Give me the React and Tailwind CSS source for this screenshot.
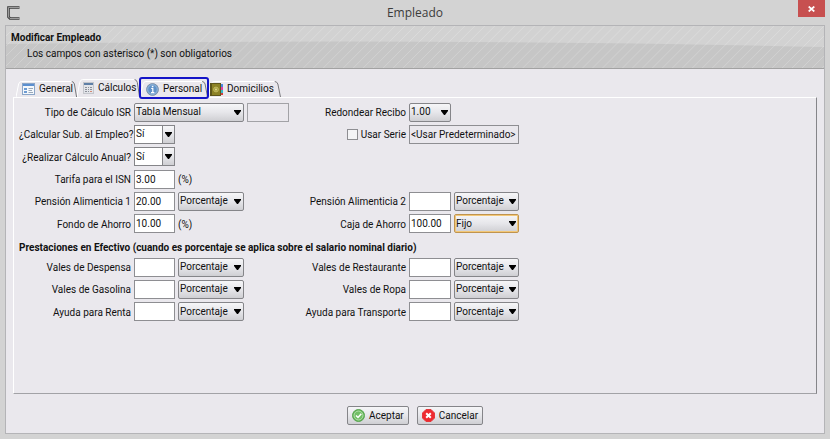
import React, { useState } from 'react';
import clsx from 'clsx';

const buttonFace = 'bg-linear-to-b from-[#f6f6f8] via-[#e6e6ea] to-[#cfcfd3]';

const GeneralIcon = () => (
  <svg width="13" height="12" viewBox="0 0 13 12" aria-hidden="true">
    <rect x="0.5" y="0.5" width="12" height="11" fill="#f4f8fc" stroke="#8ba6c8" />
    <rect x="1" y="1" width="11" height="2" fill="#5b8fd0" />
    <path d="M2 5h3v2H2zM2 8h3v2H2z" fill="#6d9bd2" />
    <path d="M6.5 5.5H11M6.5 7.5H10M6.5 9.5H11" stroke="#9aa8b8" />
  </svg>
);

const CalculatorIcon = () => (
  <svg width="11" height="12" viewBox="0 0 11 12" aria-hidden="true">
    <rect x="0.5" y="0.5" width="10" height="11" fill="#e2e4e9" stroke="#c4c6cc" />
    <rect x="1" y="1" width="9" height="2" fill="#5e7ea6" />
    <path d="M2 5h2v1H2zM5 5h1v1H5zM7 5h2v1H7zM2 7h2v1H2zM5 7h1v1H5zM7 7h2v1H7zM2 9h2v1H2zM5 9h1v1H5z" fill="#8b8f98" />
    <path d="M7 9h2v1H7z" fill="#d38a75" />
  </svg>
);

const InfoIcon = () => (
  <svg width="13" height="13" viewBox="0 0 13 13" aria-hidden="true">
    <circle cx="6.5" cy="6.5" r="5.9" fill="#5f92c8" stroke="#8194a9" />
    <circle cx="6.5" cy="6.5" r="4.8" fill="none" stroke="#a5c4e2" strokeWidth="0.8" />
    <path d="M5.2 5.5h1.6v4M5 9.7h3.4" stroke="#fff" strokeWidth="1.2" fill="none" />
    <rect x="5.8" y="2.8" width="1.6" height="1.5" fill="#fff" />
  </svg>
);

const BookIcon = () => (
  <svg width="13" height="13" viewBox="0 0 13 13" aria-hidden="true">
    <rect x="10" y="1" width="3" height="3" fill="#4a88e0" />
    <rect x="10" y="4" width="3" height="3" fill="#e040a8" />
    <rect x="10" y="7" width="3" height="3" fill="#35b8c8" />
    <rect x="10" y="10" width="3" height="2" fill="#d63c3c" />
    <rect x="0.5" y="0.5" width="10" height="12" fill="#8c8226" stroke="#5e561b" />
    <path d="M1.5 1v11" stroke="#5e561b" />
    <circle cx="6" cy="6.5" r="2.4" fill="#a69c3a" stroke="#c2ba62" />
    <circle cx="6" cy="6.5" r="0.9" fill="#e5df9a" />
  </svg>
);

const AcceptIcon = () => (
  <svg width="13" height="13" viewBox="0 0 13 13" aria-hidden="true">
    <circle cx="6.5" cy="6.5" r="6" fill="#5fb354" stroke="#5aa552" />
    <circle cx="6.5" cy="6.5" r="4.5" fill="#72bf66" stroke="#b4dfac" />
    <path d="M4 6.5l2 2 3.3-3.8" fill="none" stroke="#fff" strokeWidth="1.5" />
  </svg>
);

const CancelIcon = () => (
  <svg width="13" height="13" viewBox="0 0 13 13" aria-hidden="true">
    <path d="M4 0.5h5L12.5 4v5L9 12.5H4L0.5 9V4z" fill="#ee2a30" stroke="#e4383c" />
    <path d="M4.2 4.2l4.6 4.6M8.8 4.2L4.2 8.8" stroke="#fff" strokeWidth="2" />
  </svg>
);

const AppLogo = () => (
  <svg width="15" height="14" viewBox="0 0 15 14" aria-hidden="true">
    <path d="M13.5 1.5H2.5V11l1.5 1.5h9.5" fill="none" stroke="#3c3c3c" strokeWidth="2.6" />
    <path d="M13.5 1.5H2.5V11l1.5 1.5h9.5" fill="none" stroke="#b4b4b4" strokeWidth="0.8" />
  </svg>
);

const Arrow = ({ className }) => (
  <svg width="7" height="5" viewBox="0 0 7 5" aria-hidden="true" className={className}>
    <path d="M0 0h7v1L4 5H3L0 1z" fill="#000" />
  </svg>
);

function Select({ id, value, options, focused, className, ...rest }) {
  return (
    <div className={clsx('relative h-[19px]', className)}>
      <select
        id={id}
        defaultValue={value}
        className={clsx(
          'block h-full w-full appearance-none rounded-[2px] border pl-px outline-none',
          buttonFace,
          focused ? 'border-[#c0944f] inset-ring inset-ring-[#f3c878]' : 'border-[#858589]'
        )}
        {...rest}
      >
        {options.map((o) => (
          <option key={o}>{o}</option>
        ))}
      </select>
      <Arrow className="pointer-events-none absolute top-[7px] right-[3px]" />
    </div>
  );
}

// editable looking combo, white text area with a separate arrow button
function Combo({ id, value }) {
  return (
    <div className="relative h-[19px]">
      <select
        id={id}
        defaultValue={value}
        className="block h-full w-full appearance-none border border-[#858589] bg-white pl-px outline-none"
      >
        <option>Sí</option>
        <option>No</option>
      </select>
      <span
        className={clsx(
          'pointer-events-none absolute inset-y-0 right-0 flex w-[13px] items-center justify-center border border-[#858589]',
          buttonFace
        )}
      >
        <Arrow className="shrink-0" />
      </span>
    </div>
  );
}

function Field({ id, value = '', ...rest }) {
  return (
    <input
      id={id}
      type="text"
      defaultValue={value}
      className="h-[19px] w-full min-w-0 border border-[#8e8e92] bg-white px-px outline-none"
      {...rest}
    />
  );
}

const Label = ({ id, children, className }) => (
  <label htmlFor={id} className={clsx('pt-[2px] text-right whitespace-nowrap', className)}>
    {children}
  </label>
);

const tipos = ['Porcentaje', 'Fijo'];

// label + amount + type, takes three cells of the grid
function Amount({ id, label, value, tipo = 'Porcentaje', focused }) {
  return (
    <>
      <Label id={id}>{label}</Label>
      <Field id={id} value={value} />
      <Select value={tipo} options={tipos} focused={focused} aria-label={`Tipo de ${label}`} />
    </>
  );
}

const gridClass =
  'grid grid-cols-[112px_41px_66px_159px_42px_65px] auto-rows-fr items-center gap-x-[3px]';

const tabs = [
  { name: 'General', icon: GeneralIcon, size: 'w-[61px] pl-[6px]' },
  { name: 'Cálculos', icon: CalculatorIcon, size: 'w-[63px] pl-[6px]' },
  { name: 'Personal', icon: InfoIcon, size: 'w-[68px] pl-[6px]', marked: true },
  { name: 'Domicilios', icon: BookIcon, size: 'w-[73px] pl-[2px]' },
];

function Tab({ tab, active, onClick }) {
  const Icon = tab.icon;
  return (
    <button
      type="button"
      role="tab"
      aria-selected={active}
      onClick={onClick}
      className={clsx('relative flex items-center gap-1', active ? 'h-[18px]' : 'h-4', tab.size)}
    >
      <svg
        viewBox="0 0 70 16"
        preserveAspectRatio="none"
        className="absolute inset-0 h-full w-full"
        fill="none"
        aria-hidden="true"
      >
        <path d="M0 16L3 3Q4 0.5 6 0.5H64" stroke="#fff" vectorEffect="non-scaling-stroke" />
        <path d="M64 0.5Q66 0.5 67 3L69.5 16" stroke="#77777b" vectorEffect="non-scaling-stroke" />
      </svg>
      <span className="relative shrink-0">
        <Icon />
      </span>
      <span className="whitespace-nowrap">{tab.name}</span>
      {tab.marked && (
        <span className="pointer-events-none absolute -inset-x-px -top-1 -bottom-[2px] z-10 rounded-[3px] border-2 border-[#1414c8]" />
      )}
    </button>
  );
}

export default function App() {
  const [active, setActive] = useState('Cálculos');

  return (
    <div className="flex min-h-screen flex-col bg-[#d3d3d3] px-[5px] pb-[5px] font-['Roboto','Open_Sans',sans-serif] text-[10px] leading-4 text-[#111]">
      <div className="flex h-[25px] items-start justify-between">
        <div className="w-[27px] pt-[6px] pl-px">
          <AppLogo />
        </div>
        <h1 className="pt-1 font-['Open_Sans',sans-serif] text-[12px] leading-[18px] text-[#3c3c3c]">Empleado</h1>
        <button type="button" aria-label="Cerrar" className="flex h-[17px] w-[27px] items-center justify-center bg-[#c75050]">
          <svg width="7" height="6" viewBox="0 0 7 6" aria-hidden="true">
            <path d="M0.7 0.5l5.6 5M6.3 0.5l-5.6 5" stroke="#fff" strokeWidth="1.7" />
          </svg>
        </button>
      </div>

      <div className="flex grow flex-col border border-[#b4b4b7] bg-[#eae8ed]">
        <header className="relative h-[43px] border-b border-[#a2a2a2] bg-[#c6c6c6] px-[5px] pt-1">
          <svg viewBox="0 0 820 42" preserveAspectRatio="none" className="absolute inset-0 h-full w-full" aria-hidden="true">
            <defs>
              <pattern id="stripes" width="10" height="10" patternUnits="userSpaceOnUse">
                <path d="M-1 11L11 -1M-1 1L1 -1M9 11L11 9" stroke="#fff" strokeOpacity="0.2" />
              </pattern>
            </defs>
            <path d="M0 0H820V21Q420 12 0 18Z" fill="#d2d2d2" />
            <rect width="820" height="42" fill="url(#stripes)" />
          </svg>
          <div className="relative">
            <h2 className="font-bold">Modificar Empleado</h2>
            <p className="pl-4">Los campos con asterisco (*) son obligatorios</p>
          </div>
        </header>

        <main className="flex grow flex-col px-[7px] pt-[12px]">
          <div role="tablist" className="flex h-[16px] items-end pl-[3px]">
            {tabs.map((tab) => (
              <Tab key={tab.name} tab={tab} active={active === tab.name} onClick={() => setActive(tab.name)} />
            ))}
          </div>

          <form className="grow border border-t-white border-r-[#858589] border-b-[#a2a2a6] border-l-white pt-[3px] pl-[5px]">
            <div className={clsx(gridClass, 'min-h-[134px]')}>
              <Label id="isr">Tipo de Cálculo ISR</Label>
              <Select id="isr" value="Tabla Mensual" options={['Tabla Mensual', 'Tabla Quincenal']} className="col-span-2" />
              <div className="flex items-center justify-between">
                <input
                  aria-label="Valor ISR"
                  disabled
                  className="h-[19px] w-[42px] border border-[#a2a2a6] bg-[#eae8ed]"
                />
                <Label id="redondeo">Redondear Recibo</Label>
              </div>
              <Select id="redondeo" value="1.00" options={['1.00', '0.50']} />

              <Label id="subsidio" className="col-start-1">¿Calcular Sub. al Empleo?</Label>
              <Combo id="subsidio" value="Sí" />
              <div className="col-start-4 flex items-center justify-end gap-[3px]">
                <input
                  id="usarSerie"
                  type="checkbox"
                  className="h-[11px] w-[11px] appearance-none border border-[#8e8e92] bg-[#f4f4f6] checked:bg-[#555]"
                />
                <Label id="usarSerie">Usar Serie</Label>
              </div>
              <input
                aria-label="Serie"
                readOnly
                defaultValue="<Usar Predeterminado>"
                className="col-span-2 h-[19px] w-full min-w-0 border border-[#8e8e92] bg-[#eae8ed] px-px outline-none"
              />

              <Label id="anual" className="col-start-1">¿Realizar Cálculo Anual?</Label>
              <Combo id="anual" value="Sí" />

              <Label id="isn" className="col-start-1">Tarifa para el ISN</Label>
              <Field id="isn" value="3.00" />
              <span className="pt-[2px]">(%)</span>

              <Label id="pension1" className="col-start-1">Pensión Alimenticia 1</Label>
              <Field id="pension1" value="20.00" />
              <Select value="Porcentaje" options={tipos} aria-label="Tipo de Pensión Alimenticia 1" />
              <Amount id="pension2" label="Pensión Alimenticia 2" />

              <Label id="fondo">Fondo de Ahorro</Label>
              <Field id="fondo" value="10.00" />
              <span className="pt-[2px]">(%)</span>
              <Amount id="caja" label="Caja de Ahorro" value="100.00" tipo="Fijo" focused />
            </div>

            <h3 className="mt-[5px] font-bold">
              Prestaciones en Efectivo (cuando es porcentaje se aplica sobre el salario nominal diario)
            </h3>

            <div className={clsx(gridClass, 'min-h-[67px]')}>
              <Amount id="despensa" label="Vales de Despensa" />
              <Amount id="restaurante" label="Vales de Restaurante" />
              <Amount id="gasolina" label="Vales de Gasolina" />
              <Amount id="ropa" label="Vales de Ropa" />
              <Amount id="renta" label="Ayuda para Renta" />
              <Amount id="transporte" label="Ayuda para Transporte" />
            </div>
          </form>

          <div className="flex justify-center gap-2 pt-[12px] pb-[8px]">
            <button type="button" className={clsx('flex h-[19px] items-center gap-1 rounded-[2px] border border-[#858589] px-1', buttonFace)}>
              <AcceptIcon />
              Aceptar
            </button>
            <button type="button" className={clsx('flex h-[19px] items-center gap-1 rounded-[2px] border border-[#858589] px-1', buttonFace)}>
              <CancelIcon />
              Cancelar
            </button>
          </div>
        </main>
      </div>
    </div>
  );
}
